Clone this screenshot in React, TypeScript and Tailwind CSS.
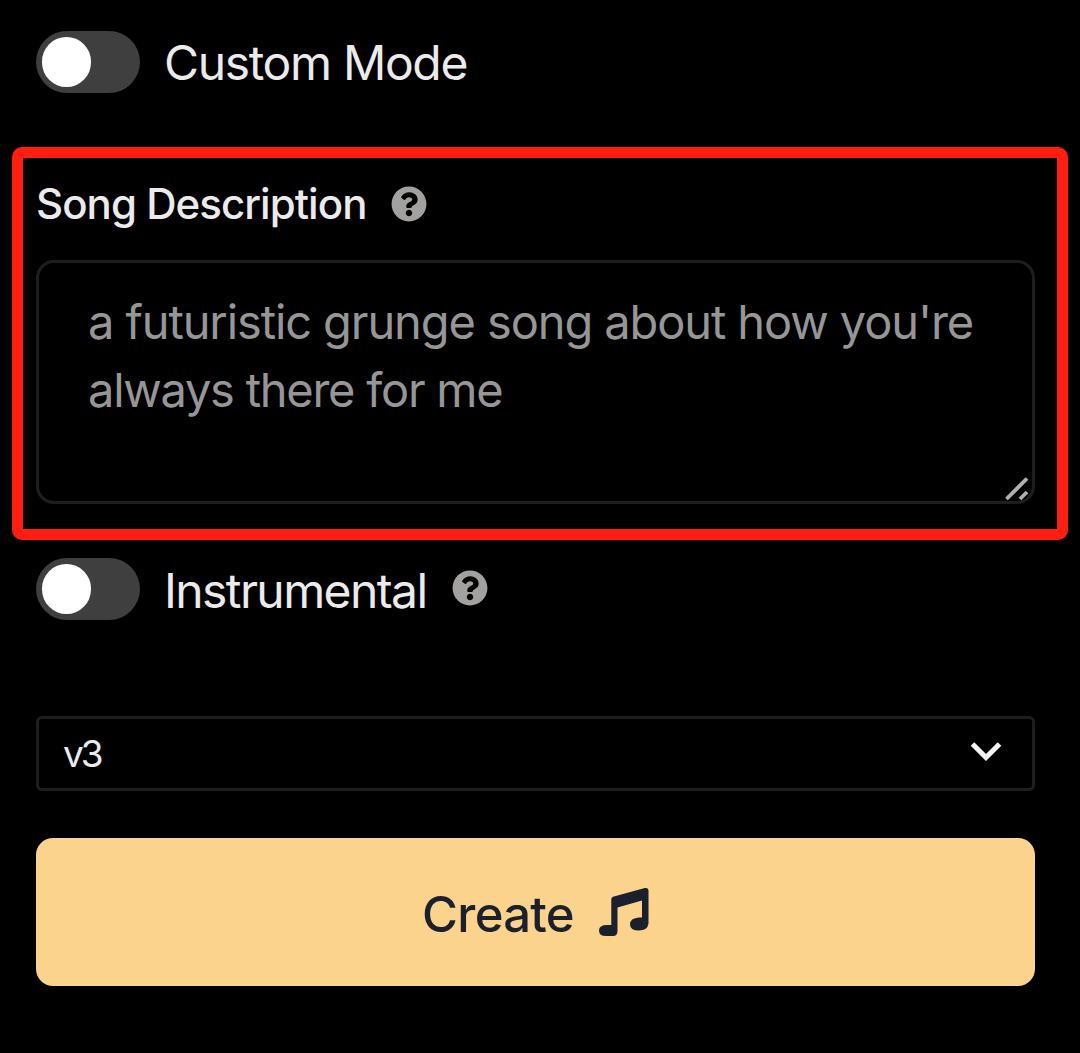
import { useState } from 'react';
import { FaQuestionCircle } from 'react-icons/fa';

interface ToggleProps {
  label: string;
  checked: boolean;
  onChange: (checked: boolean) => void;
}

function Toggle({ label, checked, onChange }: ToggleProps) {
  return (
    <button
      role="switch"
      aria-checked={checked}
      aria-label={label}
      onClick={() => onChange(!checked)}
      className={`flex h-[62px] w-[104px] shrink-0 items-center rounded-full bg-[#3f3f3f] px-1.5 ${
        checked ? 'justify-end' : 'justify-start'
      }`}
    >
      <span className="h-[50px] w-[49px] rounded-full bg-white" />
    </button>
  );
}

function MusicIcon({ className }: { className?: string }) {
  return (
    <svg className={className} viewBox="0 0 50 50" fill="currentColor">
      <path d="M14 9.7 45.8 1.1Q49.5.3 49.5 4V36.5Q48.5 43.5 40 43.5 31 43.5 31 37.5 31 31 40 30.5H43V13.5L18.5 20.5V44Q18.5 49 14 49H7Q0 49 0 43.5 0 38 8 38H12.3V12.3Q12.3 10.3 14 9.7Z" />
    </svg>
  );
}

export default function App() {
  const [customMode, setCustomMode] = useState(false);
  const [instrumental, setInstrumental] = useState(false);

  return (
    <main className="flex h-[1053px] w-[1080px] flex-col overflow-hidden bg-black pt-[31px] font-['Inter',sans-serif] text-[#ebebeb]">
      {/* Custom mode */}
      <div className="ml-9 flex h-[62px] items-center">
        <Toggle label="Custom Mode" checked={customMode} onChange={setCustomMode} />
        <span className="ml-6 pt-px text-[48px] leading-[62px] font-normal tracking-[-1.35px]">Custom Mode</span>
      </div>

      {/* Song description */}
      <section className="mx-3 mt-[54px] h-[393px] rounded-[10px] border-[11px] border-[#ff1f10] px-[13px] pt-[18px]">
        <div className="flex h-[56px] items-center">
          <h2 className="text-[42px] leading-[56px] font-medium tracking-[-0.95px] whitespace-nowrap">
            Song Description
          </h2>
          <FaQuestionCircle className="ml-[25px] size-9 text-[#a3a19f]" />
        </div>
        <div className="relative mt-7 h-[244px] w-[999px] rounded-[18px] border-[3px] border-[#1e1e1e] px-[49px] pt-[25px]">
          <p className="text-[47px] leading-[67.5px] font-normal tracking-[-1.1px] whitespace-nowrap text-[#969696]">
            a futuristic grunge song about how you're
            <br />
            <span className="tracking-[-1.25px]">always there for me</span>
          </p>
          {/* Resize grip */}
          <svg className="absolute right-[3px] bottom-0 size-6" viewBox="0 0 24 24" fill="none" stroke="#b0b0b0" strokeWidth="3.8">
            <path d="M1.5 22 22 1.5M15 22l7-7" />
          </svg>
        </div>
      </section>

      {/* Instrumental */}
      <div className="mt-[18px] ml-9 flex h-[62px] items-center">
        <Toggle label="Instrumental" checked={instrumental} onChange={setInstrumental} />
        <span className="ml-6 pt-[3px] text-[48px] leading-[62px] font-normal tracking-[-1.6px]">Instrumental</span>
        <FaQuestionCircle className="mb-0.5 ml-[26px] size-9 text-[#a3a19f]" />
      </div>

      {/* Model version */}
      <button className="mt-[96px] ml-9 flex h-[75px] w-[999px] items-center justify-between rounded-md border-[3px] border-[#1e1e1e] pr-[30px] pb-1 pl-6 text-left">
        <span className="pt-1 text-[37px] leading-[60px] font-normal tracking-[-3px]">v3</span>
        <svg className="h-5 w-8" viewBox="0 0 32 20" fill="none" stroke="#f5f5f5" strokeWidth="5">
          <path d="M2.5 2 16 15.5 29.5 2" />
        </svg>
      </button>

      <button className="mt-[47px] ml-9 flex h-[148px] w-[999px] items-center justify-center rounded-[17px] bg-[#fbd38d] text-[#1a202c]">
        <span className="pt-[5px] text-[49px] leading-[62px] font-medium tracking-[-0.7px]">Create</span>
        <MusicIcon className="ml-[25px] size-[50px]" />
      </button>
    </main>
  );
}
